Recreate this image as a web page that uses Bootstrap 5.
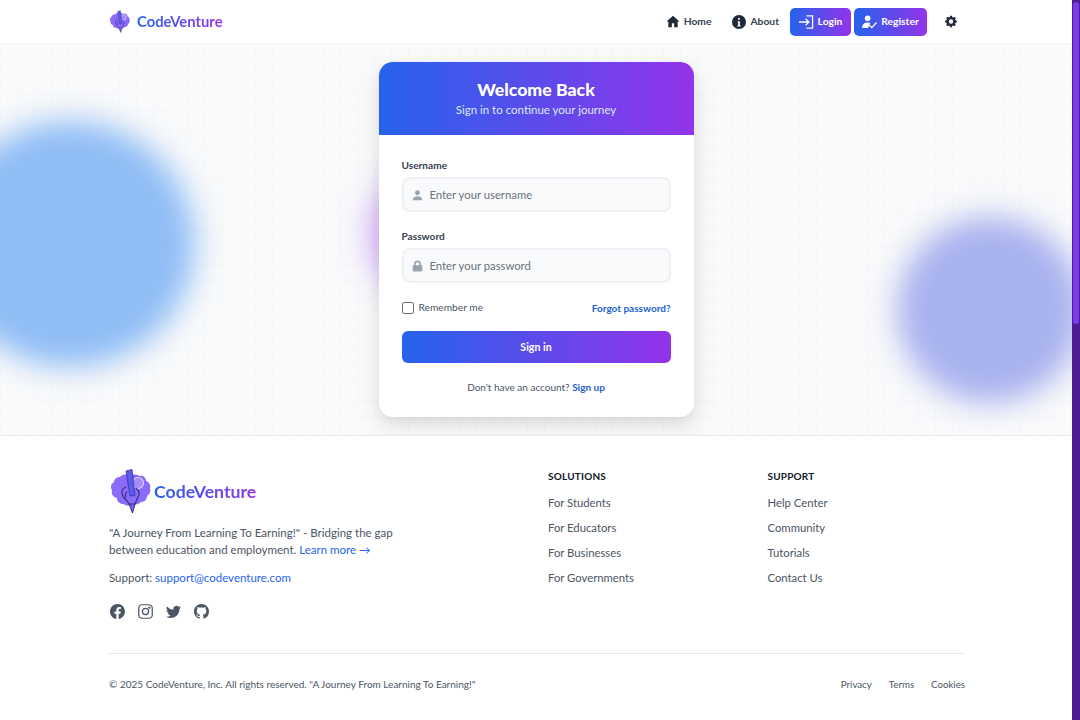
<!DOCTYPE html>
<html lang="en">
<head>
<meta charset="utf-8">
<title>CodeVenture</title>
<link href="https://cdn.jsdelivr.net/npm/bootstrap@5.3.0/dist/css/bootstrap.min.css" rel="stylesheet">
<style>
html,body{height:720px;overflow:hidden}
body{font-family:Lato,"Noto Sans",sans-serif;font-size:12px;color:#374151;background:#fff;padding-right:8px}
a{text-decoration:none}
.cv-grad{background:linear-gradient(90deg,#2563eb,#9333ea)}
.cv-gradtext{background:linear-gradient(90deg,#2563eb,#9333ea);-webkit-background-clip:text;background-clip:text;color:transparent;font-weight:700}
.cv-wrap{width:856px;margin-left:109px}
.cv-nav{height:43px;background:#fff}
.cv-brand{font-size:14.800px;gap:6px}
.cv-navlink{color:#374151;font-size:10.300px;font-weight:700;gap:4px}
.cv-navbtn{height:28px;color:#fff;font-size:10.300px;font-weight:700;gap:4px;border-radius:5px;justify-content:center}
.cv-main{height:392px;background-color:#f9fafb;background-image:linear-gradient(#f5f6f8 1px,transparent 1px),linear-gradient(90deg,#f5f6f8 1px,transparent 1px);background-size:17px 17px;overflow:hidden;padding-top:19px}
.cv-blob{position:absolute;border-radius:50%;filter:blur(15px)}
.cv-b1{left:-55px;top:78px;width:250px;height:246px;background:#8fbdf5}
.cv-b2{left:897px;top:174px;width:186px;height:186px;background:#a8b2ee}
.cv-b3{left:366px;top:124px;width:134px;height:134px;background:#d8b4fe;opacity:.9}
.cv-card{width:315px;height:355px;border-radius:14px;overflow:hidden;background:#fff;box-shadow:0 10px 25px rgba(0,0,0,.1),0 4px 10px rgba(0,0,0,.05);z-index:1}
.cv-head{height:73px;color:#fff;padding-top:1px}
.cv-head h1{font-size:17.700px;font-weight:900;line-height:22px;margin:0}
.cv-head p{font-size:11.500px;line-height:18px;margin:0;color:#dbeafe}
.cv-body{padding:22px 23px 0}
.cv-label{font-size:10.100px;font-weight:700;color:#374151;padding-top:1px;margin-bottom:4px;line-height:15px;display:block}
.cv-field{height:35px;background:#f9fafb;border:2px solid #eef0f3;border-radius:8px;padding:1px 0 0 8px;gap:7px;color:#6b7280;font-size:11.300px;margin-bottom:16px}
.cv-field span{position:relative;top:.5px}
.cv-field svg{flex:none;color:#9ca3af}
.cv-check{width:12px;height:12px;border:1px solid #6b7280;border-radius:2px;background:#fff}
.cv-rem{font-size:10.200px;color:#4b5563;gap:5px}
.cv-link{color:#1d5fd6;font-weight:700;font-size:10px}
.cv-row{height:17px;padding-top:1px}
.cv-submit{height:32px;border-radius:6px;color:#fff;font-size:10.600px;font-weight:700;margin-top:15px;padding-top:1px}
.cv-alt{font-size:10px;color:#4b5563;margin-top:16px;line-height:16px}
.cv-foot{height:285px;background:#fff;border-top:1px solid #e9ebef}
.cv-fr{--bs-gutter-x:22px;padding-top:32px}
.cv-flogo{font-size:17.700px;gap:1px;margin-bottom:8px}
.cv-ftxt{font-size:11.500px;line-height:17px;color:#4b5563;margin-bottom:11px}
.cv-ftxt a{color:#2563eb}
.cv-icons{gap:13px;color:#4b5563;margin-top:18px;padding-left:1px}
.cv-h{font-size:10px;font-weight:700;color:#111827;letter-spacing:.2px;margin:0 0 9.500px;line-height:16px}
.cv-flink{display:block;color:#4b5563;font-size:11.300px;line-height:17px;margin-bottom:8.300px}
.cv-bot{border-top:1px solid #e5e7eb;margin-top:34px;padding-top:22px;font-size:10px;color:#4b5563;line-height:16px}
.cv-bot a{color:#4b5563;margin-left:17px;font-size:9.700px}
.cv-track{position:fixed;top:0;right:0;width:8px;height:720px;background:#4c1d95}
.cv-thumb{height:322px;margin:2px 1px 0;border-radius:4px;background:#7c3aed}
</style>
</head>
<body>
<nav class="cv-nav d-flex align-items-center">
  <div class="cv-wrap d-flex align-items-center">
    <a href="#" class="cv-brand d-flex align-items-center">
      <svg width="22" height="24" viewBox="0 0 44 48"><use href="#cv-logo"/></svg>
      <span class="cv-gradtext">CodeVenture</span>
    </a>
    <div class="ms-auto d-flex align-items-center">
      <a href="#" class="cv-navlink d-flex align-items-center">
        <svg width="14" height="13" viewBox="0 0 24 22" fill="#1f2937"><path d="M12 1 1 11h3v10h6v-7h4v7h6V11h3z"/></svg>Home</a>
      <a href="#" class="cv-navlink d-flex align-items-center" style="margin-left:21px">
        <svg width="14" height="14" viewBox="0 0 16 16" fill="#1f2937"><path d="M8 0a8 8 0 1 0 0 16A8 8 0 0 0 8 0zM7 3.500h2v2H7zm-.5 3.500H9v5h1v1.200H6V12h1V8.200h-.5z"/></svg>About</a>
      <a href="#" class="cv-navbtn cv-grad d-flex align-items-center" style="width:61px;margin-left:11px">
        <svg width="15" height="14" viewBox="0 0 16 15" fill="none" stroke="#fff" stroke-width="1.400"><path d="M0 7.500h10M7 4l3.500 3.500L7 11M8 1h6.500v13H8"/></svg>Login</a>
      <a href="#" class="cv-navbtn cv-grad d-flex align-items-center" style="width:73px;margin-left:3px">
        <svg width="15" height="14" viewBox="0 0 16 15" fill="#fff"><circle cx="6" cy="3.500" r="3"/><path d="M0 14c0-4 2.500-6 6-6 1 0 2 .2 2.800.6L6.500 14z"/><path d="m8 11 2.500 2.500L15.500 8" fill="none" stroke="#fff" stroke-width="1.400"/></svg>Register</a>
      <svg style="margin:0 8px 0 18px" width="12" height="13" viewBox="0 0 16 16" fill="#1f2937"><path d="M9.405 1.050c-.413-1.400-2.397-1.400-2.810 0l-.1.340a1.464 1.464 0 0 1-2.105.872l-.31-.17c-1.283-.698-2.686.705-1.987 1.987l.169.311c.446.820.023 1.841-.872 2.105l-.34.100c-1.400.413-1.400 2.397 0 2.810l.34.100a1.464 1.464 0 0 1 .872 2.105l-.17.310c-.698 1.283.705 2.686 1.987 1.987l.311-.169a1.464 1.464 0 0 1 2.105.872l.1.340c.413 1.400 2.397 1.400 2.810 0l.1-.340a1.464 1.464 0 0 1 2.105-.872l.31.170c1.283.698 2.686-.705 1.987-1.987l-.169-.311a1.464 1.464 0 0 1 .872-2.105l.34-.100c1.400-.413 1.400-2.397 0-2.810l-.34-.100a1.464 1.464 0 0 1-.872-2.105l.17-.310c.698-1.283-.705-2.686-1.987-1.987l-.311.169a1.464 1.464 0 0 1-2.105-.872l-.1-.340zM8 10.930a2.929 2.929 0 1 1 0-5.860 2.929 2.929 0 0 1 0 5.858z"/></svg>
    </div>
  </div>
</nav>

<main class="cv-main position-relative d-flex justify-content-center align-items-start">
  <div class="cv-blob cv-b1"></div>
  <div class="cv-blob cv-b2"></div>
  <div class="cv-blob cv-b3"></div>
  <div class="cv-card position-relative">
    <div class="cv-head cv-grad d-flex flex-column align-items-center justify-content-center">
      <h1>Welcome Back</h1>
      <p>Sign in to continue your journey</p>
    </div>
    <div class="cv-body">
      <label class="cv-label">Username</label>
      <div class="cv-field d-flex align-items-center">
        <svg width="11" height="11" viewBox="0 0 16 16" fill="currentColor"><circle cx="8" cy="4" r="3.500"/><path d="M1 15c0-4 3-6 7-6s7 2 7 6z"/></svg>
        <span>Enter your username</span>
      </div>
      <label class="cv-label">Password</label>
      <div class="cv-field d-flex align-items-center">
        <svg width="11" height="12" viewBox="0 0 16 16" fill="currentColor"><path fill-rule="evenodd" d="M3 7V5a5 5 0 0 1 10 0v2h1a1 1 0 0 1 1 1v7a1 1 0 0 1-1 1H2a1 1 0 0 1-1-1V8a1 1 0 0 1 1-1zm2.500 0h5V5a2.500 2.500 0 0 0-5 0z"/></svg>
        <span>Enter your password</span>
      </div>
      <div class="cv-row d-flex justify-content-between align-items-center">
        <span class="cv-rem d-flex align-items-center"><span class="cv-check"></span>Remember me</span>
        <a href="#" class="cv-link">Forgot password?</a>
      </div>
      <div class="cv-submit cv-grad d-flex align-items-center justify-content-center">Sign in</div>
      <div class="cv-alt text-center">Don't have an account? <a href="#" class="cv-link">Sign up</a></div>
    </div>
  </div>
</main>

<footer class="cv-foot">
  <div class="cv-wrap">
    <div class="row cv-fr">
      <div class="col-6">
        <div class="cv-flogo d-flex align-items-center">
          <svg width="44" height="48" viewBox="0 0 44 48"><use href="#cv-logo"/></svg>
          <span class="cv-gradtext">CodeVenture</span>
        </div>
        <div class="cv-ftxt">"A Journey From Learning To Earning!" - Bridging the gap<br>between education and employment. <a href="#">Learn more →</a></div>
        <div class="cv-ftxt">Support: <a href="#">support@codeventure.com</a></div>
        <div class="cv-icons d-flex">
          <svg width="15" height="15" viewBox="0 0 16 16" fill="currentColor"><path d="M16 8.049c0-4.446-3.582-8.050-8-8.050C3.580 0-.002 3.603-.002 8.050c0 4.017 2.926 7.347 6.750 7.951v-5.625h-2.030V8.050H6.750V6.275c0-2.017 1.195-3.131 3.022-3.131.876 0 1.791.157 1.791.157v1.980h-1.009c-.993 0-1.303.621-1.303 1.258v1.510h2.218l-.354 2.326H9.250V16c3.824-.604 6.750-3.934 6.750-7.951z"/></svg>
          <svg width="15" height="15" viewBox="0 0 16 16" fill="none" stroke="currentColor" stroke-width="1.300"><rect x=".8" y=".8" width="14.400" height="14.400" rx="3.500"/><circle cx="8" cy="8" r="3.300"/><circle cx="12.200" cy="3.800" r=".6" fill="currentColor"/></svg>
          <svg width="15" height="15" viewBox="0 0 16 16" fill="currentColor"><path d="M5.026 15c6.038 0 9.341-5.003 9.341-9.334 0-.14 0-.282-.006-.422A6.685 6.685 0 0 0 16 3.542a6.658 6.658 0 0 1-1.889.518 3.301 3.301 0 0 0 1.447-1.817 6.533 6.533 0 0 1-2.087.793A3.286 3.286 0 0 0 7.875 6.030a9.325 9.325 0 0 1-6.767-3.429 3.289 3.289 0 0 0 1.018 4.382A3.323 3.323 0 0 1 .64 6.575v.045a3.288 3.288 0 0 0 2.632 3.218 3.203 3.203 0 0 1-.865.115 3.230 3.230 0 0 1-.614-.057 3.283 3.283 0 0 0 3.067 2.277A6.588 6.588 0 0 1 .78 13.580a6.320 6.320 0 0 1-.78-.045A9.344 9.344 0 0 0 5.026 15z"/></svg>
          <svg width="15" height="15" viewBox="0 0 16 16" fill="currentColor"><path d="M8 0C3.580 0 0 3.580 0 8c0 3.540 2.290 6.530 5.470 7.590.4.070.55-.17.55-.38 0-.19-.01-.82-.01-1.490-2.010.37-2.530-.49-2.690-.94-.09-.23-.48-.94-.82-1.130-.28-.15-.68-.52-.01-.53.63-.01 1.080.58 1.230.82.72 1.210 1.870.87 2.330.66.07-.52.28-.87.51-1.070-1.780-.2-3.640-.89-3.640-3.950 0-.87.31-1.590.82-2.150-.08-.2-.36-1.020.08-2.120 0 0 .67-.21 2.200.82.64-.18 1.320-.27 2-.27.68 0 1.360.09 2 .27 1.530-1.040 2.200-.82 2.200-.82.44 1.100.16 1.920.08 2.120.51.56.82 1.270.82 2.150 0 3.070-1.870 3.750-3.650 3.950.29.25.54.73.54 1.480 0 1.070-.01 1.930-.01 2.200 0 .21.15.46.55.38A8.012 8.012 0 0 0 16 8c0-4.420-3.580-8-8-8z"/></svg>
        </div>
      </div>
      <div class="col-3">
        <div class="cv-h">SOLUTIONS</div>
        <a href="#" class="cv-flink">For Students</a>
        <a href="#" class="cv-flink">For Educators</a>
        <a href="#" class="cv-flink">For Businesses</a>
        <a href="#" class="cv-flink">For Governments</a>
      </div>
      <div class="col-3">
        <div class="cv-h">SUPPORT</div>
        <a href="#" class="cv-flink">Help Center</a>
        <a href="#" class="cv-flink">Community</a>
        <a href="#" class="cv-flink">Tutorials</a>
        <a href="#" class="cv-flink">Contact Us</a>
      </div>
    </div>
    <div class="cv-bot d-flex justify-content-between">
      <span>© 2025 CodeVenture, Inc. All rights reserved. "A Journey From Learning To Earning!"</span>
      <span><a href="#">Privacy</a><a href="#">Terms</a><a href="#">Cookies</a></span>
    </div>
  </div>
</footer>

<div class="cv-track"><div class="cv-thumb"></div></div>

<svg width="0" height="0" class="position-absolute">
  <defs>
    <symbol id="cv-logo" viewBox="0 0 44 48">
      <path fill="#8b6cf8" d="M11 9c3-3 7-3 9-1 4-2 8-2 10 0 4-1 7 1 7 5 3 1 5 4 4 7 1 3 0 6-3 8 0 3-2 6-6 6-2 2-5 3-8 2-3 2-7 2-9 0-4 0-7-2-7-6-4-1-6-4-5-8-2-3-1-6 2-8 0-3 3-5 6-5z"/>
      <circle cx="29" cy="15" r="5.500" fill="#a78bfa" stroke="#ddd6fe" stroke-width="1.200"/>
      <path fill="#5b5bea" stroke="#3730a3" stroke-width=".8" d="m17 3 6-1.500 3 26-5 .5z"/>
      <path fill="none" stroke="#3b2a8c" stroke-width="1.200" stroke-linecap="round" d="M17 19c-3 1-5 4-4 7 1 3 3 5 5 7l2 3M27 20c3 2 4 6 2 9l-3 7M18 24c-2 1-2 3-1 5"/>
      <path fill="#7c5cf0" stroke="#312e81" stroke-width="1" d="M20 36h6l-2.500 9z"/>
    </symbol>
  </defs>
</svg>
</body>
</html>
